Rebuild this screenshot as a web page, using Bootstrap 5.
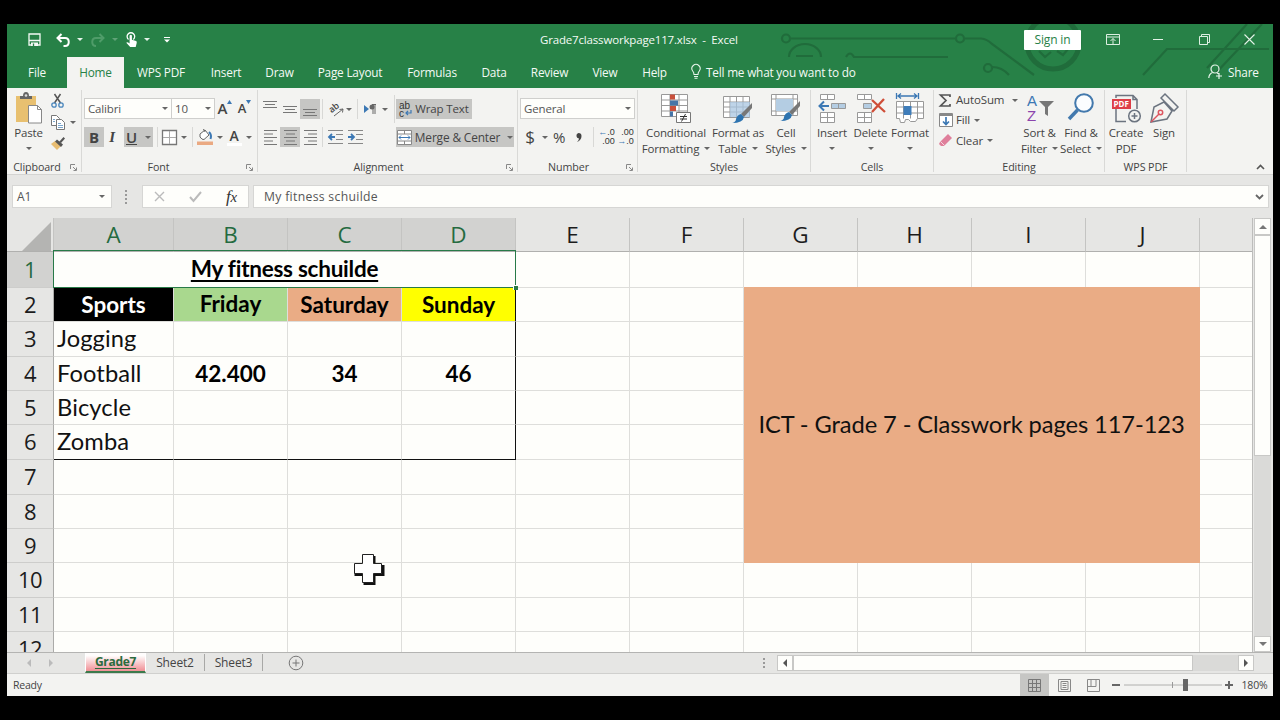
<!DOCTYPE html>
<html lang="en">
<head>
<meta charset="utf-8">
<title>Grade7classworkpage117.xlsx - Excel</title>
<link href="https://cdn.jsdelivr.net/npm/bootstrap@5.3.0/dist/css/bootstrap.min.css" rel="stylesheet">
<script src="https://cdn.jsdelivr.net/npm/bootstrap@5.3.0/dist/js/bootstrap.bundle.min.js"></script>
<style>
  :root { --green:#278147; --ribbon:#f3f3f1; --chrome:#e6e6e4; --on:#c6c6c4; --sheet:#fefefb; --ink:#444; }
  body { background:#000; font-family:"Open Sans","Noto Sans",sans-serif; font-size:11.5px; line-height:16px; letter-spacing:-.15px; color:var(--ink); padding:24px 7px; width:1280px; height:720px; overflow:hidden; }
  svg { display:block; flex:none; overflow:visible; }
  .app { width:1266px; height:672px; background:var(--chrome); overflow:hidden; }
  .bar { display:grid; align-items:center; white-space:nowrap; }
  .arr { width:0; height:0; border:3px solid transparent; border-top-color:#666; border-bottom:0; }
  .arr.dim { opacity:.3; }
  .vsep { width:1px; height:20px; background:#d8d8d6; }
  .vsep.tall { height:28px; }

  /* title and tabs */
  .top { background:var(--green); height:64px; color:#f4faf5; }
  .circuit { position:absolute; left:747px; top:0; }
  .titlebar { height:31px; grid-template-columns:14px 27px 30px 4px 32px 2px 30px 2px 38px 354px 484px 57px 64px 26px 66px 24px; justify-items:center; }
  .titlebar .arr { border-top-color:#e6f2e9; }
  .doc { justify-self:start; letter-spacing:-.17px; }
  .signin { background:#fff; color:var(--green); width:57px; height:20px; line-height:20px; border-radius:1px; font-size:12px; text-align:center; }
  .tabs { height:33px; grid-template-columns:60px 57px 74px 56px 51px 90px 74px 50px 61px 50px 49px 27px 1fr 20px 45px; font-size:11.8px; letter-spacing:-.2px; text-align:center; }
  .tabs .cur { background:var(--ribbon); color:var(--green); align-self:end; height:31px; line-height:31px; }
  .bulb { margin-left:12px; }

  /* ribbon */
  .ribbon { background:var(--ribbon); height:87px; border-bottom:1px solid #d4d4d2; }
  .grp { border-right:1px solid #d9d9d7; height:82px; margin-top:2px; display:grid; grid-template-rows:68px 14px; }
  .grp > .cap { font-size:10.7px; letter-spacing:-.1px; line-height:18px; text-align:center; display:grid; grid-template-columns:1fr 18px; }
  .grp > .cap.plain { grid-template-columns:1fr; }
  .cap svg { margin:6px 0 0 7px; }
  .big { display:flex; flex-direction:column; align-items:center; padding-top:1px; white-space:nowrap; letter-spacing:-.15px; }
  .big .ic { height:34px; display:flex; align-items:center; }
  .big .arr { margin-top:6px; }
  .big .inl { display:inline-block; margin:0 0 0 5px; vertical-align:3px; }
  .two { display:grid; grid-template-rows:26px 26px; row-gap:3px; padding-top:5px; }
  .two > .bar { justify-items:center; }
  .f1 { grid-template-columns:2px 88px 43px 20px 19px; }
  .f2 { grid-template-columns:2px 20px 20px 29px 8px 16px 14px 2px 24px 5px 24px 6px; }
  .a1 { grid-template-columns:2px 20px 20px 20px 4px 22px 5px 12px 14px 16px 3px 118px; }
  .a2 { grid-template-columns:2px 20px 20px 20px 4px 22px 18px 32px 118px; }
  .n1 { grid-template-columns:2px 115px; }
  .n2 { grid-template-columns:2px 20px 9px 20px 19px 10px 17px 21px; }
  .combo { background:var(--sheet); border:1px solid #cfcfcd; height:21px; line-height:19px; padding:0 3px 0 3px; display:flex; justify-content:space-between; align-items:center; width:100%; color:#555; }
  .tog { background:var(--on); height:20px; display:flex; align-items:center; justify-content:center; width:100%; }
  .wraptext { width:76px; justify-self:start; gap:4px; }
  .merge { gap:3px; font-size:11.9px; }
  .gl { font-size:15px; font-weight:700; }
  .gl.mid { font-weight:600; }
  .gl.sm { font-size:13px; font-weight:600; }
  .serif { font-family:"Liberation Serif",serif; font-style:italic; }
  .fcolor { border-bottom:3px solid #fff; line-height:15px; width:15px; font-size:14px; font-weight:600; text-align:center; }
  .dec { font-family:"Liberation Sans",sans-serif; font-size:9px; line-height:9px; letter-spacing:0; text-align:right; color:#333; }
  .dec b { color:#3c78b4; }
  .ed { display:grid; grid-template-rows:20px 20px 21px; align-items:center; }
  .ed > div { display:grid; grid-template-columns:17px auto 1fr; align-items:center; }

  /* formula strip */
  .formula { height:43px; grid-template-columns:5px 100px 30px 107px 4px 1016px; align-items:start; padding-top:10px; font-size:12px; }
  .fbox { background:var(--sheet); border:1px solid #d6d6d4; height:23px; line-height:21px; display:flex; align-items:center; justify-content:space-between; padding:0 6px 0 4px; color:#555; }
  .fbox.keys { padding:0 11px; }
  .fbox.entry { padding:0 4px 0 10px; font-size:12.2px; letter-spacing:.32px; }
  .fx { font-size:17px; color:#333; }

  /* sheet */
  .stage { height:434px; }
  .gridwrap { width:1246px; height:434px; overflow:hidden; background:var(--sheet); border-right:1px solid #bdbdbb; }
  .sheet { border-collapse:separate; border-spacing:0; table-layout:fixed; width:1246px; line-height:20px; letter-spacing:0; }
  .sheet th, .sheet td { padding:0; overflow:hidden; white-space:nowrap; border-right:1px solid #dededb; border-bottom:1px solid #dededb; text-align:center; vertical-align:middle; }
  .sheet th { background:var(--chrome); color:#1c1c1c; font-weight:400; font-size:22px; border-right-color:#c4c4c2; }
  .sheet tbody th { border-right-color:#ababa9; border-bottom-color:#cdcdcb; letter-spacing:-.6px; padding-bottom:2px; }
  .sheet thead th { border-bottom-color:#b0b0ae; font-size:22.5px; }
  .sheet .pick { background:#d2d2d0; color:#256b40; }
  .sheet td { font-family:Lato,"Open Sans",sans-serif; font-size:23.7px; color:#111; padding-bottom:2px; }
  .sheet td.t { text-align:left; padding-left:3px; letter-spacing:.1px; }
  .sheet td.b { font-weight:700; font-size:22.5px; color:#000; padding-bottom:0; }
  .sheet td.head { letter-spacing:-.25px; padding-bottom:2px; text-decoration:underline 1.5px; text-underline-offset:2.5px; text-decoration-skip-ink:none; }
  .sheet td.e { border-right-color:#111; }
  .sheet tr.end td.k { border-bottom-color:#111; }
  .sheet td.c-sport { background:#000; color:#fff; }
  .sheet td.c-fri { background:#a9d88e; padding-bottom:2px; }
  .sheet td.c-sat { background:#eaac85; }
  .sheet td.c-sun { background:#ff0; }
  .sheet td.note { background:#eaac85; border-color:#eaac85; box-shadow:0 -1px #eaac85; letter-spacing:-.1px; }
  .r34 { height:34px; } .r35 { height:35px; } .r36 { height:36px; }
  .corner { margin:3px 0 0 15px; }
  .sel { position:absolute; left:46px; top:32px; width:463px; height:38px; border:1.5px solid #287a48; }
  .sel i { position:absolute; right:-3px; bottom:-3px; width:5px; height:5px; background:#287a48; border-left:1px solid #fff; border-top:1px solid #fff; }
  .cross { position:absolute; left:346px; top:336px; }
  .vs { width:17px; height:434px; margin-left:1px; display:grid; grid-template-rows:17px 221px 1fr 16px; background:#dadad8; }
  .sb { background:var(--sheet); border:1px solid #c8c8c6; display:flex; align-items:center; justify-content:center; }

  /* bottom bars */
  .sheets { height:22px; border-top:1px solid #b4b4b2; border-bottom:1px solid #d0d0ce; grid-template-columns:10px 22px 24px 22px 61px 59px 58px 66px 1fr 25px 16px 400px 45px 16px 19px; justify-items:center; font-size:12px; letter-spacing:-.15px; align-items:start; }
  .sheets > * { height:20px; line-height:20px; display:flex; align-items:center; justify-content:center; }
  .sheets .live { width:100%; font-weight:700; letter-spacing:-.3px; color:#2b6b3e; background:linear-gradient(#fffdfc 15%,#f08f95); border:1px solid #fff; border-top:0; border-bottom:2px solid #3c7a4c; text-decoration:underline; text-underline-offset:2px; height:20px; }
  .sheets .tb { width:100%; border-right:1px solid #a8a8a6; height:17px; margin-top:1px; }
  .sheets .hs { width:100%; height:16px; margin-top:2px; }
  .sheets .rail { background:#dadad8; }
  .status { height:22px; background:var(--ribbon); grid-template-columns:6px 1fr 29px 30px 29px 16px 98px 14px 37px; font-size:10.5px; justify-items:center; letter-spacing:-.2px; }
  .status .tog { height:22px; }
</style>
</head>
<body>
<div class="app d-flex flex-column">

  <header class="top position-relative">
    <svg class="circuit" width="513" height="52" fill="none" stroke="#206c3b" stroke-width="2.2">
      <circle cx="32" cy="14.500" r="4"/><path d="M37 14.500H201"/><circle cx="206" cy="14.500" r="4"/><path d="M211 14.500H227Q233 15 238 20L280 51"/>
      <path d="M35 33a16 13 0 0 1 32 0M42 32h17"/><path d="M92 33q4-7 8 0H194"/>
      <circle cx="234" cy="44" r="4"/><path d="M238 43q10 0 17 8"/>
      <circle cx="299" cy="19" r="26" stroke-width="5"/><path d="M285 27l6 6 6-5M303 27l6 4 5-6"/>
      <path d="M389 51l24-26H515M453 44L493 0M460 51L508 0"/>
    </svg>
    <div class="bar titlebar position-relative">
      <span></span>
      <svg width="13" height="13" fill="none" stroke="#f4faf5" stroke-width="1.300"><path d="M1 1h11v11H1zM1 7.500h11"/><path d="M3 9.500h7V13H3z" fill="#f4faf5" stroke="none"/><path d="M5.500 10.500V13" stroke="#278147"/></svg>
      <svg width="14" height="14" fill="none" stroke="#fff" stroke-width="2"><path d="M5.500 1L1.500 5l4 4M2 5h7c5 0 5 8 0 8H7.500"/></svg>
      <span class="arr"></span>
      <svg width="14" height="14" fill="none" stroke="#4f9c69" stroke-width="2"><path d="M8.500 1l4 4-4 4M12 5H5c-5 0-5 8 0 8"/></svg>
      <span class="arr dim"></span>
      <svg width="12" height="16"><path d="M3.500 7.500A3.800 3.800 0 1 1 8.300 7.500" fill="none" stroke="#fff" stroke-width="1.300"/><path d="M4.600 3.500q1.400-1.500 2.300 0v4.200l4.200 1.300q1 .5.600 2L10.700 15H5.200L1.300 10.800q.7-1.300 3.300.7z" fill="#fff"/></svg>
      <span class="arr"></span>
      <svg width="6" height="6"><path d="M0 .5h6" stroke="#fff"/><path d="M0 2.500h6L3 5.500z" fill="#fff"/></svg>
      <span></span>
      <span class="doc">Grade7classworkpage117.xlsx &nbsp;-&nbsp; Excel</span>
      <span class="signin">Sign in</span>
      <svg width="14" height="11" fill="none" stroke="#dcefe1"><path d="M.5.5h13v10H.5zM.5 3h13M7 10V4.500M4.500 7L7 4.500 9.500 7"/></svg>
      <svg width="10" height="1"><path d="M0 0h10v1H0z" fill="#e4f3e8"/></svg>
      <svg width="11" height="11" fill="none" stroke="#dcefe1"><path d="M.5 2.500h8v8h-8zM2.500 2.500v-2h8v8h-2"/></svg>
      <svg width="11" height="11" stroke="#e4f3e8" stroke-width="1.100"><path d="M.5.5l10 10M10.500.5l-10 10"/></svg>
    </div>
    <nav class="bar tabs position-relative">
      <span>File</span><span class="cur">Home</span><span>WPS PDF</span><span>Insert</span><span>Draw</span><span>Page Layout</span><span>Formulas</span><span>Data</span><span>Review</span><span>View</span><span>Help</span>
      <svg width="10" height="15" class="bulb" fill="none" stroke="#e8f5eb" stroke-width="1.100"><path d="M3 10.500Q3 8.500 1.700 7A4.100 4.100 0 1 1 8.300 7Q7 8.500 7 10.500zM3 12.500h4M3.500 14.300h3"/></svg>
      <span class="text-start">Tell me what you want to do</span>
      <svg width="15" height="15" fill="none" stroke="#e8f5eb" stroke-width="1.200"><circle cx="7" cy="5" r="4"/><path d="M4.500 8.500Q1 10 .8 14M9 9l1.500.8M11 9v6M8 12h6"/></svg>
      <span class="text-start">Share</span>
    </nav>
  </header>

  <section class="ribbon d-flex flex-shrink-0">
    <div class="grp" style="width:75px">
      <div class="d-flex">
        <div class="big" style="width:43px">
          <span class="ic"><svg width="27" height="32"><path d="M1 4h20v26H1z" fill="#e8c070"/><path d="M5 7V4h3q0-4 3-4t3 4h3v3z" fill="#666"/><circle cx="11" cy="3.500" r="1.300" fill="#ddd"/><path d="M13.500 13.500h9l4 4V31h-13z" fill="#fff" stroke="#888"/><path d="M22.500 13.500v4h4" fill="none" stroke="#888"/></svg></span>
          Paste<span class="arr"></span>
        </div>
        <div class="d-flex flex-column" style="padding:4px 0 0 1px;gap:7px">
          <svg width="14" height="14" fill="none"><path d="M3.500 0l6 9M9.500 0l-6 9" stroke="#555" stroke-width="1.500"/><circle cx="3" cy="11" r="2.200" stroke="#4b87bd" stroke-width="1.300"/><circle cx="10" cy="11" r="2.200" stroke="#4b87bd" stroke-width="1.300"/></svg>
          <div class="d-flex align-items-center" style="gap:5px"><svg width="14" height="15" fill="#fff" stroke="#777"><path d="M.5.500h5l3 3v7h-8z"/><path d="M5.500 4.500h5l3 3v7h-8z"/><path d="M7 8.500h3M7 10.500h5M7 12.500h5M2 4.500h2M2 6.500h2" stroke="#7aa6cc"/></svg><span class="arr"></span></div>
          <svg width="14" height="13"><path d="M0 7l4-3 6 5-4 4z" fill="#e8bd72"/><path d="M4 4.500l2-2 6 5-2 2.500z" fill="#555"/><path d="M8 5l4.500-5L14 1.500 10 6z" fill="#555"/></svg>
        </div>
      </div>
      <div class="cap"><span class="ps-1">Clipboard</span><svg width="7" height="7" fill="none" stroke="#888"><path d="M.5 5V.5H5M3 3l3 3M6.500 3.500v3h-3"/></svg></div>
    </div>

    <div class="grp" style="width:176px">
      <div class="two">
        <div class="bar f1"><span></span><span class="combo">Calibri<span class="arr"></span></span><span class="combo border-start-0">10<span class="arr"></span></span>
          <span class="d-flex"><span class="gl mid">A</span><svg width="5" height="4"><path d="M0 4h5L2.500 0z" fill="#3c78b4"/></svg></span>
          <span class="d-flex"><span class="gl sm">A</span><svg width="5" height="4"><path d="M0 0h5L2.500 4z" fill="#3c78b4"/></svg></span></div>
        <div class="bar f2"><span></span><span class="tog gl">B</span><span class="gl serif me-1">I</span><span class="tog gl mid gap-2"><u>U</u><span class="arr"></span></span>
          <span class="vsep"></span>
          <svg width="15" height="15" fill="#fff" stroke="#777"><path d="M.5.5h14v14H.5z" stroke-width="1.300"/><path d="M7.500 1v13M1 7.500h13" stroke="#aaa"/></svg><span class="arr"></span>
          <span class="vsep"></span>
          <svg width="16" height="16"><path d="M3 5l5-4 4 5-5 4.500q-2 .5-4-2.500z" fill="#fff" stroke="#666"/><path d="M6 1q1-2 2 2" fill="none" stroke="#666"/><path d="M12 3q3 3 1.500 7" fill="none" stroke="#3c78b4" stroke-width="2"/><path d="M0 12.500h16V16H0z" fill="#eaa982"/></svg><span class="arr"></span>
          <span class="fcolor">A</span><span class="arr"></span></div>
      </div>
      <div class="cap"><span class="pe-1">Font</span><svg width="7" height="7" fill="none" stroke="#888"><path d="M.5 5V.5H5M3 3l3 3M6.500 3.500v3h-3"/></svg></div>
    </div>

    <div class="grp" style="width:260px">
      <div class="two">
        <div class="bar a1"><span></span>
          <svg width="14" height="20" stroke="#777"><path d="M0 2.500h14M2 5.500h10M0 8.500h14"/></svg>
          <svg width="14" height="20" stroke="#777"><path d="M0 7.500h14M2 10.500h10M0 13.500h14"/></svg>
          <span class="tog"><svg width="14" height="20" stroke="#777"><path d="M0 10.500h14M2 13.500h10M0 16.500h14"/></svg></span>
          <span class="vsep"></span>
          <svg width="14" height="14" class="ms-1"><text x="0" y="9" font-size="9" fill="#444" font-weight="600" transform="rotate(-38 4 8)">ab</text><path d="M4 14l9-7M9.500 7.500L13 7l-.5 3.500" fill="none" stroke="#666"/></svg><span class="arr"></span>
          <span class="vsep"></span>
          <svg width="12" height="11"><path d="M0 1l5 4-5 4z" fill="#3c78b4"/><path d="M9 0v10M11 0v10M12 .5H8" stroke="#666" fill="none"/><circle cx="8" cy="3" r="2.500" fill="#666"/></svg><span class="arr"></span>
          <span class="vsep tall"></span>
          <span class="tog wraptext"><svg width="12" height="16" font-family="Liberation Sans, sans-serif" font-size="10" fill="#333"><text x="0" y="7.500">ab</text><text x="0" y="15.500">c</text><path d="M12 9v3H7M9 10l-2 2 2 2" fill="none" stroke="#3c78b4" stroke-width="1.200"/></svg>Wrap Text</span></div>
        <div class="bar a2"><span></span>
          <svg width="13" height="15" stroke="#777"><path d="M0 .5h13M0 4h9M0 7.500h13M0 11h9M0 14.500h13"/></svg>
          <span class="tog"><svg width="13" height="15" stroke="#777"><path d="M0 .5h13M2 4h9M0 7.500h13M2 11h9M0 14.500h13"/></svg></span>
          <svg width="13" height="15" stroke="#777"><path d="M0 .5h13M4 4h9M0 7.500h13M4 11h9M0 14.500h13"/></svg>
          <span class="vsep"></span>
          <svg width="15" height="14" stroke="#888"><path d="M0 .5h15M8 4.500h7M8 9.500h7M0 13.500h15"/><path d="M7 7H1.500M4 4L1 7l3 3" fill="none" stroke="#3c78b4" stroke-width="1.800"/></svg>
          <svg width="15" height="14" stroke="#888"><path d="M0 .5h15M8 4.500h7M8 9.500h7M0 13.500h15"/><path d="M0 7h5.500M3 4l3 3-3 3" fill="none" stroke="#3c78b4" stroke-width="1.800"/></svg>
          <span></span>
          <span class="tog merge"><svg width="15" height="15" fill="#fff" stroke="#888"><path d="M.5.5h14v14H.5zM.5 4h14M.5 11h14M7.500 0v4M7.500 11v4"/><path d="M2 7.500h11M4 5.500l-2 2 2 2M11 5.500l2 2-2 2" fill="none" stroke="#3c78b4"/></svg>Merge &amp; Center<span class="arr ms-1"></span></span></div>
      </div>
      <div class="cap"><span>Alignment</span><svg width="7" height="7" fill="none" stroke="#888"><path d="M.5 5V.5H5M3 3l3 3M6.500 3.500v3h-3"/></svg></div>
    </div>

    <div class="grp" style="width:120px">
      <div class="two">
        <div class="bar n1"><span></span><span class="combo">General<span class="arr"></span></span></div>
        <div class="bar n2"><span></span><span style="font-size:17px">$</span><span class="arr"></span><span style="font-size:15px">%</span>
          <svg width="7" height="9"><path d="M3.500 0a3 3 0 0 1 3 3Q6.500 7 2 9q2-2 2-3.500A2.800 2.800 0 0 1 3.500 0z" fill="#444"/></svg>
          <span class="vsep"></span>
          <span class="dec"><b>←</b>.0<br>.00</span><span class="dec">.00<br><b>→</b>.0</span></div>
      </div>
      <div class="cap"><span>Number</span><svg width="7" height="7" fill="none" stroke="#888"><path d="M.5 5V.5H5M3 3l3 3M6.500 3.500v3h-3"/></svg></div>
    </div>

    <div class="grp" style="width:173px">
      <div class="d-flex" style="padding-left:3px">
        <div class="big text-center" style="width:70px"><span class="ic"><svg width="30" height="30"><path d="M.5 1.500h26v22H.5zM.5 7h26M.5 12.500h26M.5 18h26M9 1v22M18 1v22" fill="#fff" stroke="#999"/><path d="M9 1.500h5v5H9zM9 13h6v5H9z" fill="#c9503c"/><path d="M9 7.500h8v5H9zM9 18.500h3v5H9z" fill="#4675a8"/><path d="M15.500 19.500h14v10h-14z" fill="#fff" stroke="#777"/><path d="M19 23.500h7M19 26h7M24.500 21l-4 7.500" stroke="#333"/></svg></span>Conditional<span>Formatting<span class="arr inl"></span></span></div>
        <div class="big text-center" style="width:54px"><span class="ic"><svg width="30" height="30"><path d="M.5 3.500h26v21H.5zM.5 9h26M.5 14h26M.5 19h26M7 3.500v21M13.500 3.500v21M20 3.500v21" fill="#fff" stroke="#999"/><path d="M7 9h20v15H7z" fill="#a9c6e0" opacity=".75"/><path d="M29 10v5L21 24l-3-3z" fill="#777"/><path d="M18 21l3 3q-1 6-12 6 4-1 4-4 1-4 5-5z" fill="#2e74b0"/></svg></span>Format as<span>Table<span class="arr inl"></span></span></div>
        <div class="big text-center" style="width:42px"><span class="ic"><svg width="30" height="30"><path d="M.5 1.500h26v21H.5zM.5 6h26M.5 18h26M5 1.500v21M22 1.500v21" fill="#fff" stroke="#999"/><path d="M5 6h17v12H5z" fill="#b4cde3"/><path d="M29 8v5L21 22l-3-3z" fill="#777"/><path d="M18 19l3 3q-1 6-12 6 4-1 4-4 1-4 5-5z" fill="#2e74b0"/></svg></span>Cell<span>Styles<span class="arr inl"></span></span></div>
      </div>
      <div class="cap plain">Styles</div>
    </div>

    <div class="grp" style="width:123px">
      <div class="d-flex" style="padding-left:2px">
        <div class="big" style="width:38px"><span class="ic"><svg width="28" height="30" fill="#fff" stroke="#999"><path d="M2.500 1.500h14v5h-14zM9.500 1.500v5M2.500 19.500h14v10h-14zM9.500 19.500v10M2.500 24.500h14"/><path d="M13.500 10.500h14v5h-14zM20.500 10.500v5" fill="#b4cde3"/><path d="M11 13H2M6 8.500L1.500 13 6 17.500" fill="none" stroke="#3c78b4" stroke-width="2"/></svg></span>Insert<span class="arr"></span></div>
        <div class="big" style="width:39px"><span class="ic"><svg width="28" height="30" fill="#fff" stroke="#999"><path d="M.5 1.500h14v5H.5zM7.500 1.500v5M.5 19.500h14v10H.5zM7.500 19.500v10M.5 24.500h14"/><path d="M6.500 10.500h8v5h-8z" fill="#b4cde3"/><path d="M15 7l13 12M27 6L15 19" stroke="#cf4e38" stroke-width="2.300"/></svg></span>Delete<span class="arr"></span></div>
        <div class="big" style="width:40px"><span class="ic"><svg width="28" height="30" fill="#fff" stroke="#999"><path d="M.5 8.500h27v17h-6l-2 3h-5l-2-2h-3l-1 3h-4l-1-4h-3zM7.500 8.500v17M14.500 8.500v17M21.500 8.500v17M.5 14h27M.5 20h27"/><path d="M7.500 13h8v9h-8z" fill="#3f7dba" stroke="none"/><path d="M2 3h19M5 .5L2 3l3 2.500M18 .5L21 3l-3 2.500M.5 0v6M22.500 0v6" fill="none" stroke="#3c78b4" stroke-width="1.300"/></svg></span>Format<span class="arr"></span></div>
      </div>
      <div class="cap plain">Cells</div>
    </div>

    <div class="grp" style="width:171px">
      <div class="d-flex" style="padding-left:5px">
        <div class="ed" style="width:80px">
          <div><svg width="12" height="13" fill="none" stroke="#555" stroke-width="1.700"><path d="M11 3V1H1.500L7 6.500 1.500 12H11v-2"/></svg>AutoSum<span class="arr" style="margin-left:8px"></span></div>
          <div><svg width="14" height="14" fill="#fff" stroke="#888"><path d="M.5.500h13v13H.5z"/><path d="M.5 2h13" stroke-width="2"/><path d="M7 4v7M4 8.500L7 11.500l3-3" fill="none" stroke="#3c78b4" stroke-width="1.700"/></svg>Fill<span class="arr ms-1"></span></div>
          <div><svg width="14" height="13"><path d="M1 8l8-8 4 4-8 8H2L0 10z" fill="#df7f9b"/><path d="M1.500 7.500l4 4" stroke="#f5d7e0"/></svg>Clear<span class="arr ms-1"></span></div>
        </div>
        <div class="big text-center" style="width:41px"><span class="ic"><svg width="28" height="30"><text x="1" y="13" font-size="15" font-family="Liberation Sans, sans-serif" fill="#3c78b4">A</text><text x="1" y="28" font-size="15" font-family="Liberation Sans, sans-serif" fill="#8b44ac">Z</text><path d="M13 8h15l-6 6v9l-3-2v-7z" fill="#777"/></svg></span>Sort &amp;<span>Filter<span class="arr inl"></span></span></div>
        <div class="big text-center" style="width:42px"><span class="ic"><svg width="28" height="30" fill="none" stroke="#4379ad"><circle cx="17" cy="10" r="8.800" stroke-width="2" fill="#fbfdff"/><path d="M10.500 17L2 26" stroke-width="3.500"/></svg></span>Find &amp;<span>Select<span class="arr inl"></span></span></div>
      </div>
      <div class="cap plain">Editing</div>
    </div>

    <div class="grp" style="width:82px">
      <div class="d-flex" style="padding-left:1px">
        <div class="big text-center" style="width:40px"><span class="ic"><svg width="29" height="29" fill="none" stroke="#6c7480" stroke-width="1.500"><path d="M4 4V1.500h17l4 4V15M4 15v12.500h10M21 1.500v4h4"/><path d="M0 5h19v10H0z" fill="#de3f48" stroke="none"/><text x="1.500" y="13" font-size="8" font-weight="700" fill="#fff" stroke="none" letter-spacing="0">PDF</text><circle cx="22.500" cy="22" r="5.800" fill="#f3f3f1"/><path d="M22.500 19v6M19.500 22h6"/></svg></span>Create<span>PDF</span></div>
        <div class="big text-center" style="width:36px"><span class="ic"><svg width="29" height="29" fill="none" stroke="#6c7480" stroke-width="1.500"><path d="M1 28L4 13l10-5 8 9-5 8zM11 4l4-4 13 13-4 4z"/><path d="M1 28l8-8" stroke="#dd5560"/><circle cx="10.500" cy="18.500" r="2.200" stroke="#dd5560"/></svg></span>Sign</div>
      </div>
      <div class="cap plain">WPS PDF</div>
    </div>
    <svg class="ms-auto" width="9" height="6" style="margin:76px 8px 0 0" fill="none" stroke="#555" stroke-width="1.600"><path d="M1 5l3.500-3.500L8 5"/></svg>
  </section>

  <section class="bar formula flex-shrink-0">
    <span></span>
    <div class="fbox">A1<span class="arr"></span></div>
    <svg width="3" height="23" style="margin-left:13px" fill="#999"><path d="M0 5h2v2H0zM0 9h2v2H0zM0 13h2v2H0zM0 17h2v2H0z"/></svg>
    <div class="fbox keys"><svg width="11" height="11" stroke="#bbb" stroke-width="1.400"><path d="M1 1l9 9M10 1l-9 9"/></svg><svg width="13" height="11" fill="none" stroke="#bbb" stroke-width="2"><path d="M1 6l3.500 4L12 1"/></svg><span class="serif fx">f<small>x</small></span></div>
    <span></span>
    <div class="fbox entry">My fitness schuilde<svg width="9" height="6" fill="none" stroke="#666" stroke-width="1.800"><path d="M1 1l3.500 3.500L8 1"/></svg></div>
  </section>

  <main class="stage d-flex position-relative flex-shrink-0">
    <div class="gridwrap">
      <table class="sheet">
        <colgroup><col style="width:47px"><col style="width:120px"><col span="9" style="width:114px"><col></colgroup>
        <thead><tr class="r34"><th><svg class="corner" width="29" height="29"><path d="M29 0v29H0z" fill="#b4b4b2"/></svg></th><th class="pick">A</th><th class="pick">B</th><th class="pick">C</th><th class="pick">D</th><th>E</th><th>F</th><th>G</th><th>H</th><th>I</th><th>J</th><th></th></tr></thead>
        <tbody>
          <tr class="r36"><th class="pick">1</th><td colspan="4" class="b head">My fitness schuilde</td><td></td><td></td><td></td><td></td><td></td><td></td><td></td></tr>
          <tr class="r34"><th>2</th><td class="b c-sport">Sports</td><td class="b c-fri">Friday</td><td class="b c-sat">Saturday</td><td class="b e c-sun">Sunday</td><td></td><td></td><td colspan="4" rowspan="8" class="note">ICT - Grade 7 - Classwork pages 117-123</td><td></td></tr>
          <tr class="r35"><th>3</th><td class="t">Jogging</td><td></td><td></td><td class="e"></td><td></td><td></td><td></td></tr>
          <tr class="r34"><th>4</th><td class="t">Football</td><td class="b">42.400</td><td class="b">34</td><td class="b e">46</td><td></td><td></td><td></td></tr>
          <tr class="r34"><th>5</th><td class="t">Bicycle</td><td></td><td></td><td class="e"></td><td></td><td></td><td></td></tr>
          <tr class="r35 end"><th>6</th><td class="t k">Zomba</td><td class="k"></td><td class="k"></td><td class="e k"></td><td></td><td></td><td></td></tr>
          <tr class="r35"><th>7</th><td></td><td></td><td></td><td></td><td></td><td></td><td></td></tr>
          <tr class="r34"><th>8</th><td></td><td></td><td></td><td></td><td></td><td></td><td></td></tr>
          <tr class="r34"><th>9</th><td></td><td></td><td></td><td></td><td></td><td></td><td></td></tr>
          <tr class="r35"><th>10</th><td></td><td></td><td></td><td></td><td></td><td></td><td></td><td></td><td></td><td></td><td></td></tr>
          <tr class="r34"><th>11</th><td></td><td></td><td></td><td></td><td></td><td></td><td></td><td></td><td></td><td></td><td></td></tr>
          <tr class="r34"><th>12</th><td></td><td></td><td></td><td></td><td></td><td></td><td></td><td></td><td></td><td></td><td></td></tr>
        </tbody>
      </table>
    </div>
    <div class="sel"><i></i></div>
    <svg class="cross" width="32" height="32"><path d="M10.500 2h12v9h9v11h-9v9h-12v-9h-9V11h9z" fill="#111"/><path d="M9.500.5h11v9h8v10h-8v9h-11v-9h-8v-10h8z" fill="#fff" stroke="#222"/></svg>
    <div class="vs"><span class="sb"><svg width="8" height="4"><path d="M0 4h8L4 0z" fill="#777"/></svg></span><span class="sb"></span><span></span><span class="sb"><svg width="8" height="4"><path d="M0 0h8L4 4z" fill="#777"/></svg></span></div>
  </main>

  <footer>
    <div class="bar sheets">
      <span></span>
      <svg width="5" height="8"><path d="M5 6v8L1 10z" fill="#bbb"/></svg><svg width="5" height="8"><path d="M0 6v8l4-4z" fill="#bbb"/></svg><span></span>
      <span class="live">Grade7</span><span class="tb">Sheet2</span><span class="tb">Sheet3</span>
      <svg width="16" height="20" fill="none" stroke="#777"><circle cx="8" cy="10" r="6.800"/><path d="M4.500 10h7M8 6.500v7"/></svg>
      <span></span>
      <svg width="3" height="20" fill="#999"><path d="M0 5h2v2H0zM0 9h2v2H0zM0 13h2v2H0z"/></svg>
      <span class="sb hs"><svg width="4" height="8"><path d="M4 0v8L0 4z" fill="#555"/></svg></span>
      <span class="sb hs"></span>
      <span class="hs rail"></span>
      <span class="sb hs"><svg width="4" height="8"><path d="M0 0v8l4-4z" fill="#555"/></svg></span>
    </div>
    <div class="bar status">
      <span></span><span class="w-100">Ready</span>
      <span class="tog"><svg width="13" height="13" fill="none" stroke="#777"><path d="M.5.5h12v12H.5zM.5 4.500h12M.5 8.500h12M4.500.5v12M8.500.5v12"/></svg></span>
      <svg width="13" height="13" fill="none" stroke="#888"><path d="M.5.5h12v12H.5zM3 2.500h7v8H3zM4.500 4.500h4M4.500 6.500h4M4.500 8.500h4"/></svg>
      <svg width="13" height="13" fill="none" stroke="#888"><path d="M.5.5h12v12H.5zM4 .5v7h5v-7M.5 7.500H4"/></svg>
      <svg width="8" height="2"><path d="M0 0h8v2H0z" fill="#666"/></svg>
      <svg width="98" height="12"><path d="M0 6h98" stroke="#b0b0ae"/><path d="M48.500 3v6" stroke="#999"/><path d="M59 0h5v12h-5z" fill="#666"/></svg>
      <svg width="8" height="8"><path d="M0 3h8v2H0zM3 0h2v8H3z" fill="#666"/></svg>
      <span>180%</span>
    </div>
  </footer>
</div>
</body>
</html>
